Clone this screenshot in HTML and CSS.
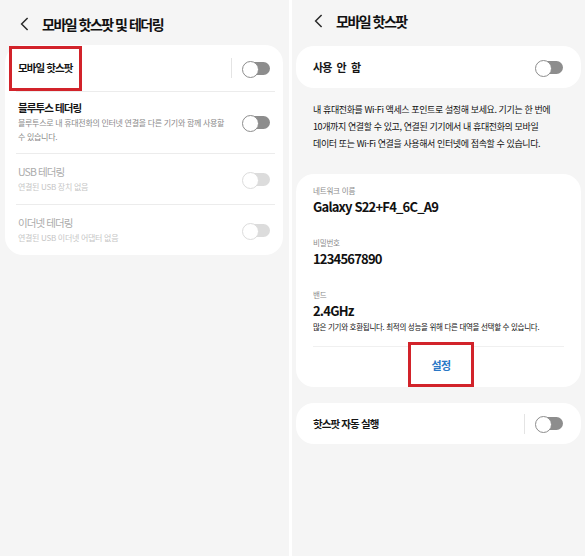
FILE: index.html
```html
<!DOCTYPE html>
<html lang="ko">
<head>
    <meta charset="UTF-8">
    <meta name="viewport" content="width=device-width, initial-scale=1.0">
    <title>모바일 핫스팟 및 테더링</title>
    <link rel="stylesheet" href="styles.css">
</head>
<body>
<div class="screens">

    <!-- Left screen: hotspot & tethering list -->
    <section class="screen screen-left">
        <header class="appbar">
            <svg class="back" width="9" height="14" viewBox="0 0 9 14"><path d="M7.6 1 L1.6 7 L7.6 13" fill="none" stroke="#2b2b2b" stroke-width="1.5"/></svg>
            <h1>모바일 핫스팟 및 테더링</h1>
        </header>

        <div class="card list">
            <div class="row row-first">
                <span class="mark mark-title"><span class="title">모바일 핫스팟</span></span>
                <span class="spacer"></span>
                <span class="vsep"></span>
                <span class="switch"></span>
            </div>
            <div class="row row-bt">
                <div class="text">
                    <div class="title">블루투스 테더링</div>
                    <div class="sub">블루투스로 내 휴대전화의 인터넷 연결을 다른 기기와 함께 사용할 수 있습니다.</div>
                </div>
                <span class="switch"></span>
            </div>
            <div class="row row-off">
                <div class="text">
                    <div class="title">USB 테더링</div>
                    <div class="sub">연결된 USB 장치 없음</div>
                </div>
                <span class="switch switch-off"></span>
            </div>
            <div class="row row-off">
                <div class="text">
                    <div class="title">이더넷 테더링</div>
                    <div class="sub">연결된 USB 이더넷 어댑터 없음</div>
                </div>
                <span class="switch switch-off"></span>
            </div>
        </div>
    </section>

    <div class="gutter"></div>

    <!-- Right screen: mobile hotspot details -->
    <section class="screen screen-right">
        <header class="appbar">
            <svg class="back" width="9" height="14" viewBox="0 0 9 14"><path d="M7.6 1 L1.6 7 L7.6 13" fill="none" stroke="#2b2b2b" stroke-width="1.5"/></svg>
            <h1>모바일 핫스팟</h1>
        </header>

        <div class="card single">
            <span class="title title-wide">사용 안 함</span>
            <span class="spacer"></span>
            <span class="switch"></span>
        </div>

        <p class="desc">내 휴대전화를 Wi-Fi 액세스 포인트로 설정해 보세요. 기기는 한 번에<br>10개까지 연결할 수 있고, 연결된 기기에서 내 휴대전화의 모바일<br>데이터 또는 Wi-Fi 연결을 사용해서 인터넷에 접속할 수 있습니다.</p>

        <div class="card info">
            <div class="field">
                <div class="label">네트워크 이름</div>
                <div class="value">Galaxy S22+F4_6C_A9</div>
            </div>
            <div class="field">
                <div class="label">비밀번호</div>
                <div class="value">1234567890</div>
            </div>
            <div class="field">
                <div class="label">밴드</div>
                <div class="value">2.4GHz</div>
                <div class="note">많은 기기와 호환됩니다. 최적의 성능을 위해 다른 대역을 선택할 수 있습니다.</div>
            </div>
            <div class="action">
                <span class="mark mark-action">설정</span>
            </div>
        </div>

        <div class="card single auto">
            <span class="title">핫스팟 자동 실행</span>
            <span class="spacer"></span>
            <span class="vsep"></span>
            <span class="switch"></span>
        </div>
    </section>

</div>
</body>
</html>
```

FILE: styles.css
```css
* {
    box-sizing: border-box;
    margin: 0;
    padding: 0;
}
html, body {
    width: 585px;
    height: 556px;
    overflow: hidden;
}
body {
    font-family: "Noto Sans CJK KR", "Noto Sans", sans-serif;
    background-color: #f5f5f5;
    color: #151515;
}
.screens {
    display: flex;
    height: 556px;
}
.screen {
    background-color: #f5f5f5;
    display: flex;
    flex-direction: column;
}
.screen-left {
    width: 289px;
}
.gutter {
    width: 3px;
    background-color: #fff;
}
.screen-right {
    flex: 1;
}

/* top bar */
.appbar {
    display: flex;
    align-items: center;
    gap: 13px;
}
.screen-left .appbar {
    height: 45px;
    padding: 3px 0 0 20px;
}
.screen-right .appbar {
    height: 46px;
    padding: 0 0 4px 22px;
}
.appbar h1 {
    font-size: 14px;
    line-height: 18px;
    font-weight: 700;
    letter-spacing: -1.5px;
    color: #111;
}

.card {
    background-color: #fff;
    border-radius: 18px;
}
.spacer {
    flex: 1;
}
.title {
    font-size: 10.5px;
    line-height: 16px;
    font-weight: 700;
    letter-spacing: -0.9px;
    color: #151515;
    white-space: nowrap;
}
.title-wide {
    font-size: 11px;
    word-spacing: 3px;
}
.vsep {
    width: 1px;
    height: 20px;
    background-color: #e4e4e4;
    margin-right: 10px;
}

/* off switch: white knob at the left of a grey track */
.switch {
    position: relative;
    width: 28px;
    height: 15px;
    flex: none;
}
.switch::after {
    content: "";
    position: absolute;
    top: 1px;
    bottom: 1px;
    left: 5px;
    right: 0;
    border-radius: 7px;
    background-color: #8d8d8d;
}
.switch::before {
    content: "";
    position: absolute;
    left: 0;
    top: 0;
    width: 15px;
    height: 15px;
    border: 1.5px solid #8d8d8d;
    border-radius: 50%;
    background-color: #fff;
    z-index: 1;
}
.switch-off::after {
    background-color: #dcdcdc;
}
.switch-off::before {
    border-color: #dcdcdc;
}

/* red annotation frame */
.mark {
    display: flex;
    align-items: center;
    border: 3px solid #d2232a;
    background-color: #fff;
}

/* left list */
.list {
    margin: 0 6px 0 5px;
}
.list .row {
    display: flex;
    align-items: center;
    margin: 0 8px 0 11px;
    padding: 0 5px 0 2px;
    border-top: 1px solid #ececec;
}
.list .row-first {
    border-top: none;
    height: 46px;
}
.mark-title {
    height: 45px;
    margin-left: -9px;
    padding: 0 6px;
}
.row-bt {
    padding-top: 8px !important;
    padding-bottom: 9px !important;
}
.row-off {
    padding-top: 10px !important;
    padding-bottom: 10px !important;
}
.text {
    flex: 1;
    min-width: 0;
}
.sub {
    font-size: 8px;
    line-height: 14px;
    letter-spacing: -0.3px;
    color: #8a8a8a;
    max-width: 212px;
}
.row-off .title {
    color: #ababab;
    font-weight: 400;
}
.row-off .sub {
    color: #c6c6c6;
}

/* right screen */
.single {
    display: flex;
    align-items: center;
    height: 42px;
    margin: 0 4px;
    padding: 0 18px 0 17px;
}
.desc {
    padding: 13px 10px 0 21px;
    font-size: 9px;
    line-height: 17px;
    letter-spacing: -0.4px;
    color: #111;
    white-space: nowrap;
}
.info {
    margin: 22px 4px 0;
    padding: 11px 17px 0;
}
.field + .field {
    margin-top: 20px;
}
.label {
    font-size: 7.5px;
    line-height: 12px;
    color: #8a8a8a;
    letter-spacing: -0.2px;
}
.value {
    font-size: 13px;
    line-height: 20px;
    font-weight: 700;
    letter-spacing: -0.8px;
    color: #111;
}
.note {
    font-size: 7.5px;
    line-height: 11px;
    letter-spacing: -0.3px;
    color: #111;
    white-space: nowrap;
}
.action {
    margin-top: 14px;
    border-top: 1px solid #f0f0f0;
    display: flex;
    justify-content: center;
}
.mark-action {
    width: 66px;
    height: 45px;
    margin: -5px 0 0 5px;
    justify-content: center;
    font-size: 11px;
    font-weight: 700;
    letter-spacing: -0.5px;
    color: #2a77c6;
}
.auto {
    margin-top: 16px;
    height: 41px;
}
```
